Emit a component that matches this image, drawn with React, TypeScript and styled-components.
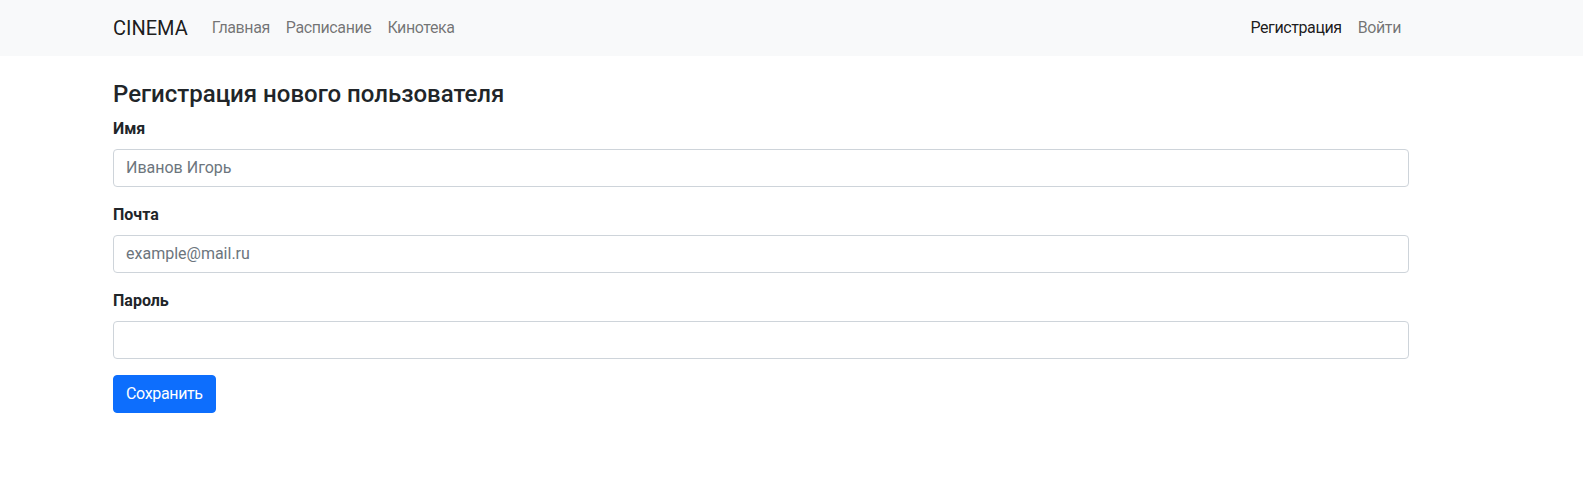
import React from "react";
import styled, { createGlobalStyle } from "styled-components";

const FONT = `Roboto, "Noto Sans", sans-serif`;

const GlobalStyle = createGlobalStyle`
  *, *::before, *::after { box-sizing: border-box; }
  body {
    margin: 0;
    font-family: ${FONT};
    font-size: 16px;
    line-height: 1.5;
    color: #212529;
    background: #fff;
  }
`;

const Navbar = styled.nav`
  background: #f8f9fa;
  padding: 8px 0;
`;

const Container = styled.div`
  width: 1320px;
  margin-left: 101px;
  padding: 0 12px;
`;

const NavInner = styled(Container)`
  display: flex;
  align-items: center;
`;

const Brand = styled.a`
  font-size: 20px;
  line-height: 30px;
  padding: 5px 0;
  margin-right: 16px;
  color: rgba(0, 0, 0, 0.9);
  text-decoration: none;
`;

const NavList = styled.div<{ $end?: boolean }>`
  display: flex;
  margin-left: ${(p) => (p.$end ? "auto" : "0")};
`;

const NavLink = styled.a<{ $active?: boolean }>`
  padding: 8px;
  line-height: 24px;
  letter-spacing: -0.4px;
  color: ${(p) => (p.$active ? "rgba(0,0,0,0.9)" : "rgba(0,0,0,0.55)")};
  text-decoration: none;
`;

const Main = styled(Container)`
  padding-top: 24px;
`;

const Title = styled.h4`
  margin: 0 0 8px;
  font-size: 24px;
  font-weight: 500;
  line-height: 1.2;
`;

const Field = styled.div`
  margin-bottom: 16px;
`;

const Label = styled.label`
  display: block;
  font-weight: 700;
  margin-bottom: 8px;
  line-height: 24px;
`;

const Input = styled.input`
  display: block;
  width: 100%;
  height: 38px;
  padding: 6px 12px;
  font-family: ${FONT};
  font-size: 16px;
  line-height: 24px;
  color: #212529;
  border: 1px solid #ced4da;
  border-radius: 4px;
  background: #fff;
  outline: none;
  &::placeholder { color: #6c757d; }
`;

const Button = styled.button`
  font-family: ${FONT};
  font-size: 16px;
  line-height: 24px;
  letter-spacing: -0.35px;
  padding: 6px 12px;
  color: #fff;
  background: #0d6efd;
  border: 1px solid #0d6efd;
  border-radius: 4px;
`;

export default function App() {
  return (
    <>
      <GlobalStyle />
      <Navbar>
        <NavInner>
          <Brand href="#">CINEMA</Brand>
          <NavList>
            <NavLink href="#">Главная</NavLink>
            <NavLink href="#">Расписание</NavLink>
            <NavLink href="#">Кинотека</NavLink>
          </NavList>
          <NavList $end>
            <NavLink href="#" $active>Регистрация</NavLink>
            <NavLink href="#">Войти</NavLink>
          </NavList>
        </NavInner>
      </Navbar>
      <Main>
        <Title>Регистрация нового пользователя</Title>
        <Field>
          <Label>Имя</Label>
          <Input placeholder="Иванов Игорь" />
        </Field>
        <Field>
          <Label>Почта</Label>
          <Input placeholder="example@mail.ru" />
        </Field>
        <Field>
          <Label>Пароль</Label>
          <Input type="password" />
        </Field>
        <Button>Сохранить</Button>
      </Main>
    </>
  );
}
